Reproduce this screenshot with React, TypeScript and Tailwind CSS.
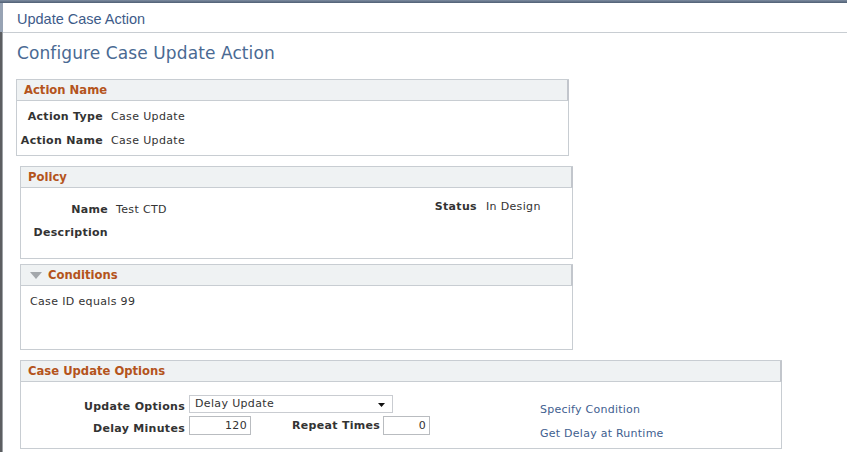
export default function App() {
  const f = "font-['DejaVu_Sans',Verdana,sans-serif]";
  const hdr = "h-[21px] bg-[#eff2f3] border-b border-[#c8cdd2] flex items-center pt-[2px] text-[11.6px] font-bold text-[#b4541c] leading-none";
  const lbl = "text-[11px] font-bold text-[#333333] leading-[16px] tracking-[0.3px] text-right whitespace-nowrap";
  const val = "text-[11px] text-[#333333] leading-[16px] tracking-[0.35px] whitespace-nowrap";
  const link = "text-[11px] leading-[16px] tracking-[0.25px] text-[#41608f] whitespace-nowrap";
  return (
    <div className={`w-[847px] h-[452px] bg-white flex flex-col overflow-hidden ${f}`}>
      <div className="h-[3px] bg-gradient-to-b from-[#7d8ca0] to-[#4f5f74] shrink-0" />
      <div className="flex flex-1">
        <div className="w-[3px] flex flex-col shrink-0">
          <div className="h-[29px] bg-[#97a3b4]" />
          <div className="flex-1 bg-[#5c5e61] border-r border-[#9ea2a6]" />
        </div>
        <div className="flex-1 flex flex-col">
          <div className="h-[30px] border-b border-[#c8cdd2] pl-[14px] pt-[8px]">
            <div className="font-['Liberation_Sans',Arial,sans-serif] text-[14.5px] leading-[16px] text-[#3d5b89]">
              Update Case Action
            </div>
          </div>
          <div className="pl-[14px] mt-[10px] text-[17px] leading-[20px] tracking-[0.1px] text-[#4a6a93]">
            Configure Case Update Action
          </div>

          {/* Action Name */}
          <div className="ml-[13px] mt-[16px] w-[553px] h-[77px] border border-[#c8cdd2] flex flex-col">
            <div className={`${hdr} pl-[7px] border-r-2 border-r-[#c2c6cc] -mr-px`}>Action Name</div>
            <div className="flex flex-col gap-[8px] pt-[8px]">
              <div className="flex">
                <div className={`${lbl} w-[86px]`}>Action Type</div>
                <div className={`${val} ml-[8px]`}>Case Update</div>
              </div>
              <div className="flex">
                <div className={`${lbl} w-[86px]`}>Action Name</div>
                <div className={`${val} ml-[8px]`}>Case Update</div>
              </div>
            </div>
          </div>

          {/* Policy */}
          <div className="ml-[17px] mt-[10px] w-[553px] h-[93px] border border-[#c8cdd2] flex flex-col">
            <div className={`${hdr} pl-[7px] border-r-2 border-r-[#c2c6cc] -mr-px`}>Policy</div>
            <div className="flex">
              <div className="flex flex-col gap-[7px] pt-[14px]">
                <div className="flex">
                  <div className={`${lbl} w-[87px]`}>Name</div>
                  <div className={`${val} ml-[8px]`}>Test CTD</div>
                </div>
                <div className="flex">
                  <div className={`${lbl} w-[87px]`}>Description</div>
                </div>
              </div>
              <div className="flex pt-[11px] ml-[268px]">
                <div className={lbl}>Status</div>
                <div className={`${val} ml-[9px]`}>In Design</div>
              </div>
            </div>
          </div>

          {/* Conditions */}
          <div className="ml-[17px] mt-[5px] w-[553px] h-[86px] border border-[#c8cdd2] flex flex-col">
            <div className={`${hdr} pl-[9px] border-r-2 border-r-[#c2c6cc] -mr-px`}>
              <svg width="12" height="7" viewBox="0 0 12 7" className="mr-[6px] -mt-[2px]">
                <polygon points="0,0 12,0 6,7" fill="#a3a7ab" />
              </svg>
              Conditions
            </div>
            <div className={`${val} pl-[9px] pt-[8px] text-left`}>Case ID equals 99</div>
          </div>

          {/* Case Update Options */}
          <div className="ml-[17px] mt-[10px] w-[762px] h-[89px] border border-[#c8cdd2] flex flex-col">
            <div className={`${hdr} pl-[7px] border-r-2 border-r-[#c2c6cc] -mr-px`}>Case Update Options</div>
            <div className="flex">
              <div className="w-[519px] flex flex-col pt-[13px] gap-[3px]">
                <div className="flex items-end">
                  <div className={`${lbl} w-[164px] leading-[14px] mb-[-2px]`}>Update Options</div>
                  <div className="ml-[4px] w-[204px] h-[18px] border border-[#c9ccd1] bg-white flex items-center justify-between pl-[5px] pr-[7px]">
                    <span className={`${val} leading-[14px]`}>Delay Update</span>
                    <svg width="7" height="4" viewBox="0 0 7 4" className="mt-[2px]">
                      <polygon points="0,0 7,0 3.5,4" fill="#111" />
                    </svg>
                  </div>
                </div>
                <div className="flex items-end">
                  <div className={`${lbl} w-[164px] leading-[14px] mb-[-2px]`}>Delay Minutes</div>
                  <div className="ml-[4px] w-[62px] h-[19px] border border-[#b9bcc0] bg-white flex items-center justify-end pr-[3px]">
                    <span className={`${val} leading-[14px]`}>120</span>
                  </div>
                  <div className={`${lbl} ml-[41px] leading-[15px] self-center mt-[1px]`}>Repeat Times</div>
                  <div className="ml-[3px] w-[47px] h-[19px] border border-[#b9bcc0] bg-white flex items-center justify-end pr-[3px]">
                    <span className={`${val} leading-[14px]`}>0</span>
                  </div>
                </div>
              </div>
              <div className="flex flex-col pt-[20px] gap-[8px]">
                <div className={link}>Specify Condition</div>
                <div className={link}>Get Delay at Runtime</div>
              </div>
            </div>
          </div>
        </div>
      </div>
    </div>
  );
}
